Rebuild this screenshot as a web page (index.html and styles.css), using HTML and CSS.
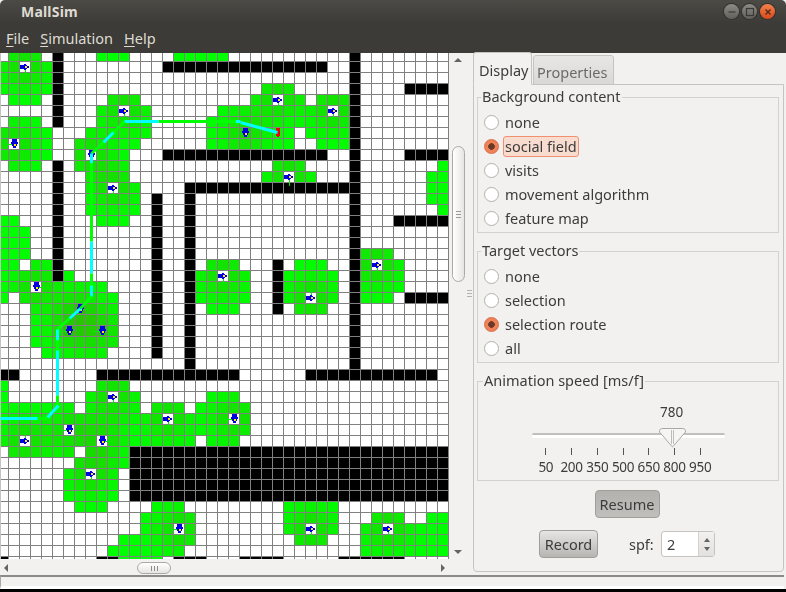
FILE: index.html
```html
<!DOCTYPE html>
<html lang="en">
<head>
<meta charset="utf-8">
<title>MallSim</title>
<link rel="stylesheet" href="styles.css">
</head>
<body>
<div class="window">
  <header class="titlebar">
    <span class="title">MallSim</span>
    <div class="win-buttons">
      <span class="win-btn"><svg width="14" height="14" viewBox="0 0 14 14"><path d="M3.5 7h7" stroke="#3a3936" stroke-width="1.2"/></svg></span>
      <span class="win-btn"><svg width="14" height="14" viewBox="0 0 14 14"><rect x="3.5" y="3.5" width="7" height="7" fill="none" stroke="#3a3936" stroke-width="1.2"/></svg></span>
      <span class="win-btn close"><svg width="14" height="14" viewBox="0 0 14 14"><path d="M4.5 4.5l5 5M9.5 4.5l-5 5" stroke="#4a2a18" stroke-width="1.3"/></svg></span>
    </div>
  </header>
  <nav class="menubar">
    <span class="menu"><u>F</u>ile</span>
    <span class="menu"><u>S</u>imulation</span>
    <span class="menu"><u>H</u>elp</span>
  </nav>
  <main class="main">
    <section class="scrollpane">
      <div class="scroll-top">
        <canvas id="sim" class="sim" width="449" height="506"></canvas>
        <div class="vscroll">
          <span class="arrow arrow-up"></span>
          <div class="vthumb"><span class="vgrip"></span></div>
          <span class="arrow arrow-down"></span>
        </div>
      </div>
      <div class="hscroll">
        <span class="arrow arrow-left"></span>
        <div class="hthumb"><span class="hgrip"></span></div>
        <span class="arrow arrow-right"></span>
      </div>
    </section>
    <div class="divider"><span class="divider-grip"></span></div>
    <section class="notebook">
      <div class="tabs">
        <span class="tab active">Display</span>
        <span class="tab">Properties</span>
      </div>
      <div class="panel">
        <fieldset class="group">
          <legend class="legend">Background content</legend>
          <div class="radio-row"><span class="radio"></span><span class="radio-label">none</span></div>
          <div class="radio-row"><span class="radio on"></span><span class="radio-label focus">social field</span></div>
          <div class="radio-row"><span class="radio"></span><span class="radio-label">visits</span></div>
          <div class="radio-row"><span class="radio"></span><span class="radio-label">movement algorithm</span></div>
          <div class="radio-row"><span class="radio"></span><span class="radio-label">feature map</span></div>
        </fieldset>
        <fieldset class="group">
          <legend class="legend">Target vectors</legend>
          <div class="radio-row"><span class="radio"></span><span class="radio-label">none</span></div>
          <div class="radio-row"><span class="radio"></span><span class="radio-label">selection</span></div>
          <div class="radio-row"><span class="radio on"></span><span class="radio-label">selection route</span></div>
          <div class="radio-row"><span class="radio"></span><span class="radio-label">all</span></div>
        </fieldset>
        <fieldset class="group speed">
          <legend class="legend legend-speed">Animation speed [ms/f]</legend>
          <div class="slider">
            <div class="slider-value">780</div>
            <div class="track">
              <svg class="thumb" width="29" height="21" viewBox="0 0 29 21">
                <path d="M5 1.5H24Q28 1.5 27.5 5L15 19.5Q14.5 20 14 19.5L1.5 5Q1 1.5 5 1.5Z" fill="#f6f5f4" stroke="#a8a7a4"/>
                <path d="M13.5 3v14M15.5 3v14" stroke="#bdbcb9"/>
              </svg>
            </div>
            <div class="ticks">
              <div class="tick">50</div>
              <div class="tick">200</div>
              <div class="tick">350</div>
              <div class="tick">500</div>
              <div class="tick">650</div>
              <div class="tick">800</div>
              <div class="tick">950</div>
            </div>
          </div>
        </fieldset>
        <div class="resume-row"><span class="btn pressed">Resume</span></div>
        <div class="record-row">
          <span class="btn record">Record</span>
          <span class="spf">spf:</span>
          <div class="spin">
            <span class="spin-value">2</span>
            <span class="spin-steps"><span class="step-up"></span><span class="step-down"></span></span>
          </div>
        </div>
      </div>
    </section>
  </main>
  <footer class="status"><div class="status-box"></div></footer>
</div>
<script src="sim.js"></script>
</body>
</html>
```
FILE: styles.css
```css
* { box-sizing: border-box; }
html, body { margin: 0; padding: 0; background: #000; }
body { width: 786px; height: 592px; overflow: hidden; font-family: "Noto Sans", "Open Sans", sans-serif; color: #3c3c3c; font-size: 14.5px; }
.window { width: 786px; height: 589px; display: flex; flex-direction: column; background: #f2f1f0; }

.titlebar { height: 28px; flex: none; display: flex; align-items: center; justify-content: space-between; padding: 0 11px 6px 21px; background: linear-gradient(#4c4a45, #3c3b37 85%); border-radius: 5px 5px 0 0; }
.title { color: #dfdbd2; font-weight: 700; font-size: 14px; letter-spacing: 0.2px; }
.win-buttons { display: flex; gap: 3px; margin-top: 1px; }
.win-btn { width: 15px; height: 15px; border-radius: 50%; background: linear-gradient(#8d8b85, #62605b); display: flex; align-items: center; justify-content: center; box-shadow: 0 0 0 1px #33322e; }
.win-btn.close { background: linear-gradient(#f5824c, #d9481a); }

.menubar { height: 25px; flex: none; display: flex; align-items: center; gap: 11px; padding: 0 6px 6px; background: #3c3b37; color: #dfdbd2; font-size: 14.5px; }
.menu u { text-underline-offset: 2px; }

.main { height: 522px; flex: none; display: flex; }
.scrollpane { width: 466px; flex: none; display: flex; flex-direction: column; }
.scroll-top { display: flex; height: 506px; flex: none; }
.sim { display: block; width: 449px; height: 506px; flex: none; }
.vscroll { width: 17px; flex: none; display: flex; flex-direction: column; align-items: center; padding: 5px 0 5px 1px; }
.vthumb { width: 13px; height: 136px; margin-top: 84px; border: 1px solid #aaa9a6; border-radius: 7px; background: linear-gradient(90deg, #fff, #e6e5e3); display: flex; align-items: center; justify-content: center; flex: none; }
.vgrip { width: 5px; height: 7px; background: repeating-linear-gradient(#9b9a97 0 1px, transparent 1px 3px); }
.hscroll { height: 16px; flex: none; display: flex; align-items: center; padding: 2px 21px 0 4px; }
.hthumb { width: 34px; height: 12px; margin-left: 129px; border: 1px solid #aaa9a6; border-radius: 6px; background: linear-gradient(#fff, #e6e5e3); display: flex; align-items: center; justify-content: center; }
.hgrip { width: 7px; height: 5px; background: repeating-linear-gradient(90deg, #8d8c89 0 1px, transparent 1px 3px); }
.arrow { display: block; width: 0; height: 0; flex: none; border-style: solid; border-color: transparent; }
.arrow-up { border-width: 0 4px 4px; border-bottom-color: #65645f; }
.arrow-down { border-width: 4px 4px 0; border-top-color: #65645f; margin-top: auto; }
.arrow-left { border-width: 4px 4px 4px 0; border-right-color: #65645f; }
.arrow-right { border-width: 4px 0 4px 4px; border-left-color: #65645f; margin-left: auto; }

.divider { width: 7px; flex: none; display: flex; align-items: center; justify-content: center; padding-bottom: 42px; }
.divider-grip { width: 5px; height: 7px; background: repeating-linear-gradient(#b3b2af 0 1px, transparent 1px 3px); }

.notebook { width: 311px; flex: none; padding-bottom: 3px; display: flex; flex-direction: column; }
.tabs { height: 32px; flex: none; display: flex; align-items: flex-end; margin-bottom: -1px; position: relative; z-index: 1; }
.tab { height: 30px; padding: 3px 6px 0 3px; display: flex; align-items: center; background: linear-gradient(#e8e7e5, #d9d8d6); border: 1px solid #c5c4c1; border-bottom: 1px solid #c5c4c1; border-radius: 3px 3px 0 0; color: #6a6a68; margin-left: 1px; }
.tab.active { height: 33px; width: 59px; padding: 2px 3px 0 5px; background: #f2f1f0; border-bottom-color: #f2f1f0; color: #3c3c3c; margin-left: 0; }
.panel { flex: 1; border: 1px solid #c5c4c1; border-radius: 0 0 4px 4px; padding: 1px 4px 0 3px; }

.group { margin: 0 0 7px; padding: 2px 0 2px; border: 1px solid #d2d1ce; min-width: 0; }
.legend { padding: 0 1px; margin-left: 3px; height: 22px; line-height: 20px; }
.legend-speed { margin-left: 5px; }
.radio-row { height: 24px; display: flex; align-items: center; padding-left: 6px; }
.radio { width: 15px; height: 15px; border-radius: 50%; border: 1px solid #b0afac; background: #fff; flex: none; margin-right: 4px; display: flex; align-items: center; justify-content: center; }
.radio.on { background: radial-gradient(circle, #6b3a28 0 3px, #f0825a 3.6px); border-color: #d86a42; }
.radio-label { padding: 0 1px 0 1px; height: 21px; line-height: 19px; border: 1px solid transparent; border-radius: 3px; }
.radio-label.focus { background: #f8dccf; border-color: #f09070; }

.speed { height: 111px; margin-bottom: 0; padding: 0; }
.slider { width: 193px; margin-left: 54px; }
.slider-value { height: 19px; line-height: 16px; padding-left: 128px; font-size: 13.5px; margin-top: 12px; }
.track { height: 5px; margin-top: 10px; background: #fff; border-top: 2px solid #c0bfbc; border-radius: 2px; position: relative; }
.thumb { position: absolute; left: 126px; top: -8px; }
.ticks { display: flex; margin: 10px 0 0 1px; width: 180px; }
.tick { flex: 1 1 0; min-width: 0; text-align: center; font-size: 13.5px; line-height: 18px; padding-top: 10px; background: linear-gradient(#55544f, #55544f) center top / 1px 7px no-repeat; white-space: nowrap; letter-spacing: -0.3px; }

.resume-row { display: flex; justify-content: center; margin-top: 9px; }
.btn { height: 28px; display: flex; align-items: center; justify-content: center; border: 1px solid #9f9e9b; border-radius: 4px; }
.btn.pressed { width: 65px; margin-right: 2px; background: linear-gradient(#b3b2af, #c0bfbc); }
.btn.record { width: 59px; background: linear-gradient(#e6e5e3, #b6b5b2); }
.record-row { display: flex; align-items: center; margin: 12px 0 0 62px; }
.spf { margin-left: 31px; width: 32px; }
.spin { width: 54px; height: 26px; display: flex; border: 1px solid #c5c4c1; border-radius: 3px; background: #fff; }
.spin-value { flex: 1; padding-left: 5px; line-height: 24px; }
.spin-steps { width: 16px; display: flex; flex-direction: column; align-items: center; justify-content: center; gap: 5px; background: linear-gradient(#f2f1f0, #e2e1df); border-left: 1px solid #d2d1ce; }
.step-up, .step-down { width: 0; height: 0; border-style: solid; border-color: transparent; }
.step-up { border-width: 0 3px 4px; border-bottom-color: #65645f; }
.step-down { border-width: 4px 3px 0; border-top-color: #65645f; }

.status { height: 14px; flex: none; padding-right: 2px; }
.status-box { height: 100%; border-top: 2px solid #8b8a87; border-left: 1px solid #a9a8a5; border-bottom: 3px solid #fff; }
```
FILE: sim.js
```js
// Draws the MallSim map: cells, grid, social field, agents and the selected route.
var green = {
  0:"1-3 9-11 16-20",1:"0-1 3-4",2:"0-4",3:"0-4 24-26",4:"1-3 10-12 23-24 26-27 29-31",
  5:"9-10 12-13 20-29 31",6:"1-3 9-13 19-31",7:"0-4 8-13 19-26 28-31",8:"0 2-4 7-12 19-26 29-31",
  9:"0-4 7 9-11",10:"1-3 7-11 25-27 40",11:"8-11 24-25 27-28 39-40",12:"8-9 11-12 39-40",
  13:"8-12 39-40",14:"8-12 40",15:"0-1 9-11",16:"0-2",17:"0-2",18:"0-2 33-35",
  19:"0-1 3-4 19-21 27-29 33 35-36",20:"0-4 6 18-19 21-22 26-30 33-36",21:"0-2 4-9 18-22 26-30 33-36",
  22:"0 2-10 18-22 26-27 29-30 33-35",23:"3-10 19-21 27-29",24:"3-10",25:"3-10",26:"3-10",27:"4-9",
  30:"0 9-11",31:"0 8-9 11-12 19-21",32:"0-6 8-12 14-16 18-22",33:"0-14 16-20 22",34:"0-5 7-22",
  35:"0-1 3-8 10-17 19-21",36:"1-6 8-11",37:"7-11",38:"6-7 9-10",39:"6-10",40:"6-10",
  41:"7-9 14-16 26-30",42:"13-17 26-30 34-36 39-40",43:"13-15 17 26-27 29-30 33-34 36-40",
  44:"11-17 27-29 33-40",45:"10-16 33-40",46:"11-14"
};
var black = {
  1:"15-29",3:"37-40",9:"15-29 37-40",12:"17-32",15:"36-40",22:"37-40",29:"0-1 9-21 28-39",
  36:"12-40",37:"12-40",38:"12-40",39:"12-40",40:"12-40",46:"0 9-10 16-18 22-25 31-36"
};
var walls = [[5,0,6],[5,10,20],[14,13,27],[17,12,28],[32,0,29],[25,19,23]];
// col, row, kind (h = nose right, v = nose down), tail direction
var agents = [
  [2,1,"h","d"],[11,5,"h","d"],[10,12,"h","d"],[25,4,"h","d"],[30,5,"h","d"],[26,11,"h","d"],
  [20,20,"h","d"],[28,22,"h","u"],[34,19,"h","d"],[10,31,"h","d"],[15,33,"h","d"],[8,38,"h","d"],
  [28,43,"h","d"],[35,43,"h","d"],[2,35,"h","u"],
  [1,8,"v","l"],[3,21,"v","r"],[16,43,"v","l"],[6,34,"v","l"],[21,33,"v","l"],[9,35,"v","r"],
  [6,25,"v","l"],[9,25,"v","l"],[7,23,"v","r"],[22,7,"v","l"],[8,9,"v","u"]
];
var route = [
  ["#00ffff",[[277,132],[240,122]]],["#00ff00",[[240,122],[235,121]]],
  ["#00ffff",[[240,121],[235,121]]],["#00ff00",[[235,121],[158,121]]],["#00ffff",[[158,121],[124,121]]],
  ["#00ff00",[[124,121],[113,132]]],["#00ffff",[[113,132],[103,142]]],["#00ff00",[[103,142],[91,153]]],
  ["#00ffff",[[91,153],[91,163]]],["#00ff00",[[91,163],[91,241]]],["#00ffff",[[91,241],[91,273]]],
  ["#00ff00",[[91,273],[91,285]]],["#00ffff",[[91,285],[91,296]]],
  ["#00ff00",[[91,296],[80,308]]],["#00ffff",[[80,308],[69,318]]],["#00ff00",[[69,318],[57,329]]],
  ["#00ffff",[[57,329],[57,340]]],["#00ff00",[[57,340],[57,350]]],["#00ffff",[[57,350],[57,395]]],
  ["#00ff00",[[57,395],[57,405]]],["#00ffff",[[58,405],[47,417]]],
  ["#00ff00",[[47,418],[37,418]]],["#00ffff",[[37,418],[0,418]]]
];

function ranges(text) {
  var out = [];
  text.split(" ").forEach(function (part) {
    var p = part.split("-");
    var a = +p[0], b = +(p[1] || p[0]);
    for (var i = a; i <= b; i++) out.push(i);
  });
  return out;
}

var ctx = document.getElementById("sim").getContext("2d");
var cx = function (col) { return 11 * col - 2; };
var cy = function (row) { return 11 * row - 2; };
var W = 449, H = 506;

ctx.fillStyle = "#fff";
ctx.fillRect(0, 0, W, H);

function fieldColour(col, row) {
  var v = 0;
  agents.forEach(function (a) {
    var d = Math.sqrt((a[0] - col) * (a[0] - col) + (a[1] - row) * (a[1] - row));
    if (d < 3.6) v += Math.pow(1 - d / 3.6, 1.5);
  });
  var r = Math.min(56, Math.round(30 * v));
  var g = Math.max(172, Math.round(255 - 44 * v));
  return "rgb(" + r + "," + g + ",0)";
}

Object.keys(green).forEach(function (row) {
  ranges(green[row]).forEach(function (col) {
    ctx.fillStyle = fieldColour(col, +row);
    ctx.fillRect(cx(col), cy(+row), 10, 10);
  });
});
ctx.fillStyle = "#000";
Object.keys(black).forEach(function (row) {
  ranges(black[row]).forEach(function (col) { ctx.fillRect(cx(col), cy(+row), 10, 10); });
});
walls.forEach(function (w) {
  for (var r = w[1]; r <= w[2]; r++) ctx.fillRect(cx(w[0]), cy(r), 10, 10);
});

ctx.fillStyle = "#808080";
for (var c = 0; c <= 40; c++) ctx.fillRect(8 + 11 * c, 0, 1, H);
for (var r = 0; r <= 45; r++) ctx.fillRect(0, 8 + 11 * r, 448, 1);
ctx.fillStyle = "#c4c3c0";
ctx.fillRect(0, 0, 1, H);

var onGreen = { "6,25": 1, "9,25": 1, "7,23": 1, "22,7": 1 };
agents.forEach(function (a) {
  var x = cx(a[0]), y = cy(a[1]);
  if (!onGreen[a[0] + "," + a[1]]) {
    ctx.fillStyle = "#fff";
    ctx.fillRect(x, y, 10, 10);
  }
  var mx = x + 5, my = y + 5;
  ctx.fillStyle = "#00ee00";
  if (a[3] === "d") ctx.fillRect(mx, my, 1, 9);
  if (a[3] === "u") ctx.fillRect(mx, my - 9, 1, 9);
  if (a[3] === "l") ctx.fillRect(mx - 10, my, 10, 1);
  if (a[3] === "r") ctx.fillRect(mx, my, 9, 1);
  ctx.fillStyle = "#0000e0";
  if (a[2] === "h") {
    ctx.fillRect(x, my - 2, 7, 4);
    ctx.fillRect(mx - 1, my - 3, 2, 6);
    ctx.fillRect(x + 7, my - 1, 2, 2);
    ctx.fillStyle = "#ffe600";
    ctx.fillRect(mx, my - 1, 2, 2);
  } else {
    ctx.fillRect(mx - 2, y, 5, 7);
    ctx.fillRect(mx - 3, y + 3, 7, 2);
    ctx.fillRect(mx - 1, y + 7, 3, 2);
    ctx.fillStyle = "#ffe600";
    ctx.fillRect(mx, my, 2, 2);
  }
});

// selected agent, drawn red
var sx = cx(25), sy = cy(7);
ctx.fillStyle = "#ee0000";
ctx.fillRect(sx + 3, sy, 4, 8);
ctx.fillRect(sx + 4, sy + 8, 2, 1);

ctx.lineWidth = 3;
ctx.lineCap = "butt";
route.forEach(function (seg) {
  ctx.strokeStyle = seg[0];
  ctx.beginPath();
  ctx.moveTo(seg[1][0][0] + 0.5, seg[1][0][1] - 53 + 0.5);
  ctx.lineTo(seg[1][1][0] + 0.5, seg[1][1][1] - 53 + 0.5);
  ctx.stroke();
});
```
